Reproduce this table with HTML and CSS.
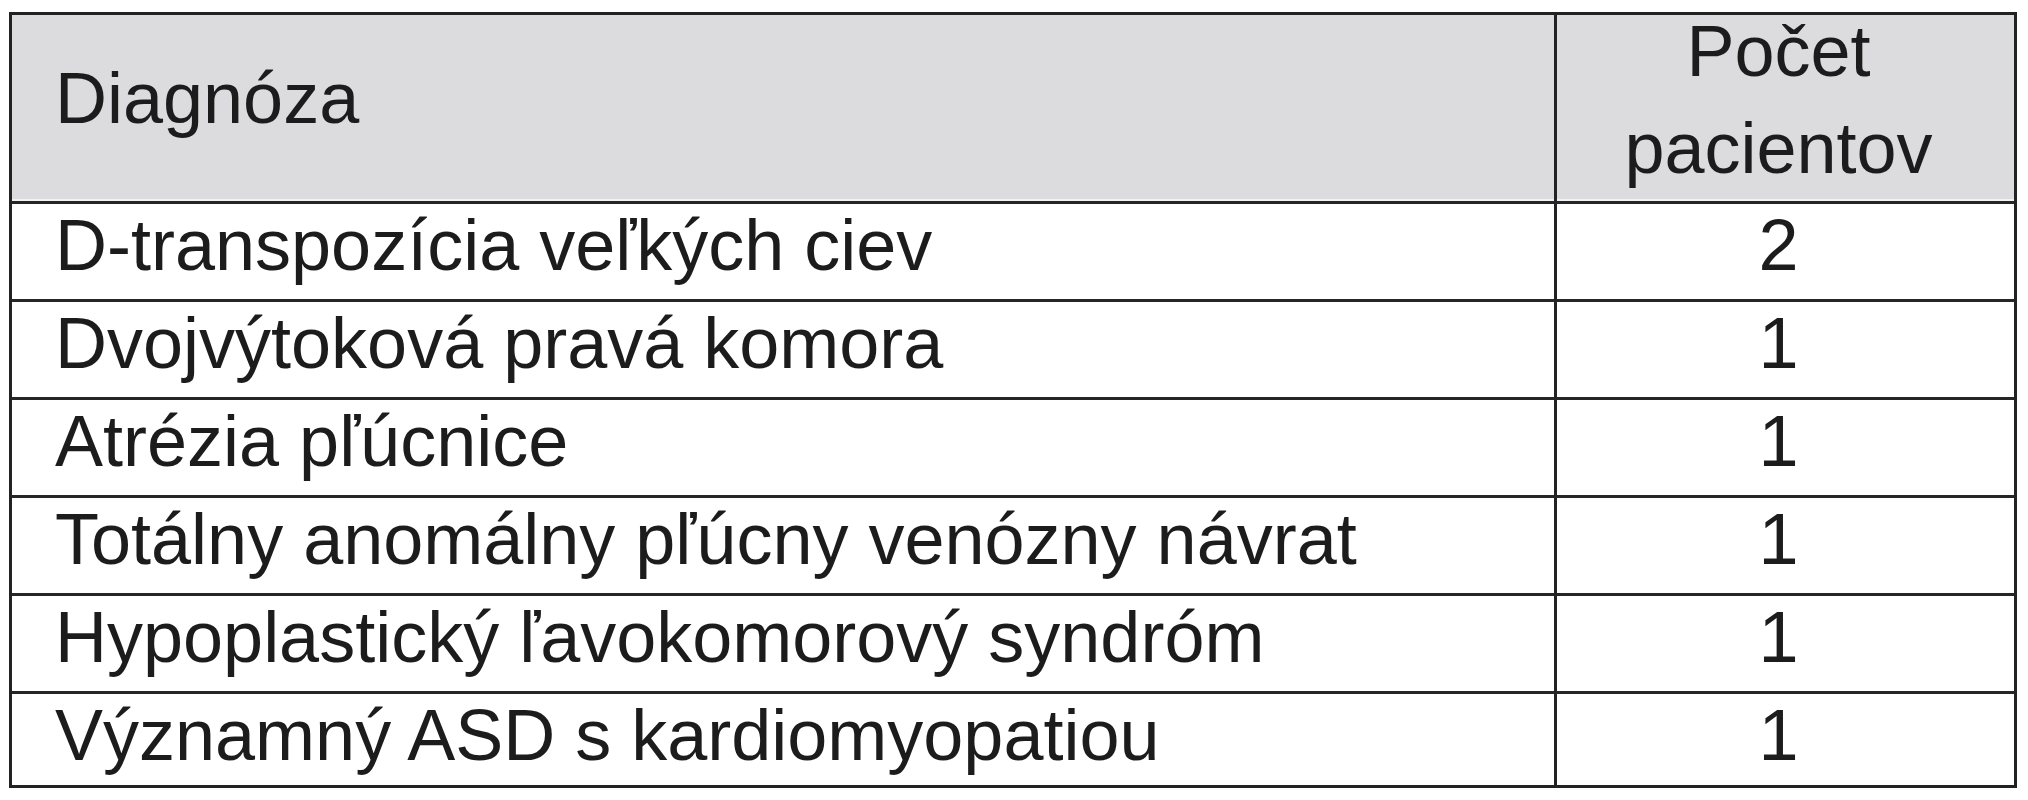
FILE: index.html
```html
<!DOCTYPE html>
<html lang="sk">
<head>
<meta charset="utf-8">
<title>Diagnóza</title>
<link rel="stylesheet" href="styles.css">
</head>
<body>
<table class="dx-table">
  <thead>
    <tr class="head-row">
      <th class="col-diag">Diagnóza</th>
      <th class="col-count"><span class="hl">Počet</span><span class="hl hl2">pacientov</span></th>
    </tr>
  </thead>
  <tbody>
    <tr class="row"><td class="col-diag">D-transpozícia veľkých ciev</td><td class="col-count">2</td></tr>
    <tr class="row"><td class="col-diag">Dvojvýtoková pravá komora</td><td class="col-count">1</td></tr>
    <tr class="row"><td class="col-diag">Atrézia pľúcnice</td><td class="col-count">1</td></tr>
    <tr class="row"><td class="col-diag">Totálny anomálny pľúcny venózny návrat</td><td class="col-count">1</td></tr>
    <tr class="row"><td class="col-diag">Hypoplastický ľavokomorový syndróm</td><td class="col-count">1</td></tr>
    <tr class="row last"><td class="col-diag">Významný ASD s kardiomyopatiou</td><td class="col-count">1</td></tr>
  </tbody>
</table>
</body>
</html>
```

FILE: styles.css
```css
html, body {
  margin: 0;
  padding: 0;
  background: #ffffff;
}

body {
  font-family: "Liberation Sans", Arial, sans-serif;
  color: #1c1c1c;
}

.dx-table {
  margin: 12px 0 0 9px;
  width: 2008px;
  border: 3px solid #222222;
  border-collapse: separate;
  border-spacing: 0;
  table-layout: fixed;
  font-size: 72px;
  line-height: 72px;
}

.dx-table th,
.dx-table td {
  padding: 0;
  vertical-align: top;
  font-weight: normal;
  box-sizing: border-box;
  white-space: nowrap;
}

.col-diag {
  width: 1545px;
  text-align: left;
  padding-left: 43px !important;
  border-right: 3px solid #222222;
}

.col-count {
  text-align: center;
  padding-right: 14px !important;
}

.head-row th {
  height: 189px;
  background: #dcdcde;
  border-bottom: 3px solid #262626;
  box-shadow: inset 0 -2px 0 #f2f2f2;
}

.head-row .col-diag {
  padding-top: 47px;
}

.head-row .col-count {
  padding-top: 0;
}

.hl {
  display: block;
  line-height: 72px;
}

.hl2 {
  margin-top: 25px;
}

.row td {
  height: 98px;
  padding-top: 5px;
  border-bottom: 3px solid #262626;
}

.row.last td {
  height: 91px;
  border-bottom: none;
}
```
